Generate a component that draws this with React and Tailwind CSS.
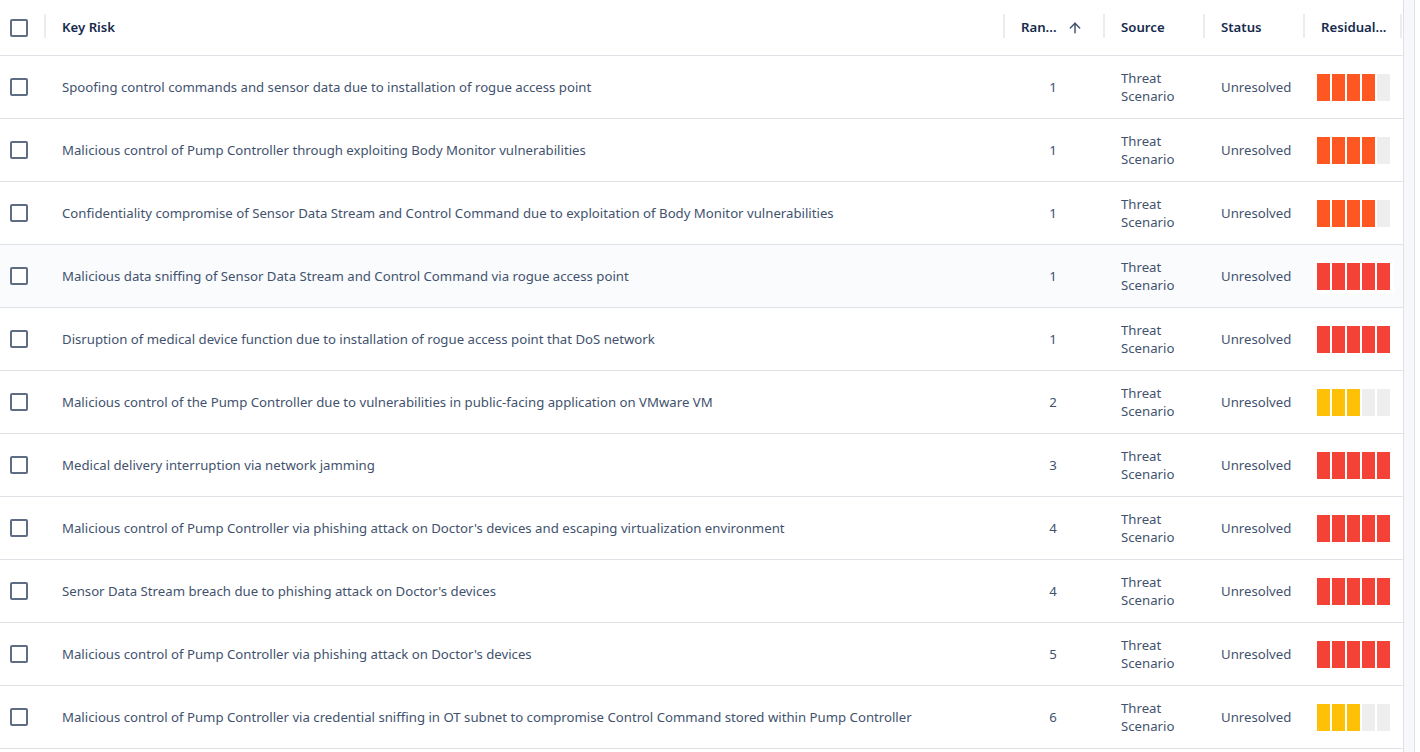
import React from "react"
import { ArrowUp } from "lucide-react"

const COLORS = { orange: "bg-[#ff5722]", red: "bg-[#f44336]", yellow: "bg-[#ffc107]" }

const risks = [
  { title: "Spoofing control commands and sensor data due to installation of rogue access point", rank: 1, level: "orange", filled: 4 },
  { title: "Malicious control of Pump Controller through exploiting Body Monitor vulnerabilities", rank: 1, level: "orange", filled: 4 },
  { title: "Confidentiality compromise of Sensor Data Stream and Control Command due to exploitation of Body Monitor vulnerabilities", rank: 1, level: "orange", filled: 4 },
  { title: "Malicious data sniffing of Sensor Data Stream and Control Command via rogue access point", rank: 1, level: "red", filled: 5, hover: true },
  { title: "Disruption of medical device function due to installation of rogue access point that DoS network", rank: 1, level: "red", filled: 5 },
  { title: "Malicious control of the Pump Controller due to vulnerabilities in public-facing application on VMware VM", rank: 2, level: "yellow", filled: 3 },
  { title: "Medical delivery interruption via network jamming", rank: 3, level: "red", filled: 5 },
  { title: "Malicious control of Pump Controller via phishing attack on Doctor's devices and escaping virtualization environment", rank: 4, level: "red", filled: 5 },
  { title: "Sensor Data Stream breach due to phishing attack on Doctor's devices", rank: 4, level: "red", filled: 5 },
  { title: "Malicious control of Pump Controller via phishing attack on Doctor's devices", rank: 5, level: "red", filled: 5 },
  { title: "Malicious control of Pump Controller via credential sniffing in OT subnet to compromise Control Command stored within Pump Controller", rank: 6, level: "yellow", filled: 3 },
]

const GRID = "grid grid-cols-[44px_959px_100px_100px_100px_100px]"

const Checkbox = () => (
  <div className="w-[18px] h-[18px] rounded-[2px] border-2 border-[#5e6c84] bg-white" />
)

const Sep = () => <div className="absolute left-0 top-[14px] w-[2px] h-[24px] bg-[#ebecf0]" />

const RiskBar = ({ level, filled }) => (
  <div className="flex gap-[2px] bg-white p-1">
    {[0, 1, 2, 3, 4].map((i) => (
      <div key={i} className={`w-[13px] h-[27px] ${i < filled ? COLORS[level] : "bg-[#eeeeee]"}`} />
    ))}
  </div>
)

export default function App() {
  return (
    <div className="flex w-[1420px] h-[752px] bg-white text-[13.2px] text-[#42526e] font-['Noto_Sans',sans-serif] overflow-hidden">
      <div className="w-[1403px]">
        <div className={`${GRID} h-[56px] border-b border-[#dfe1e6] font-semibold text-[#172b4d]`}>
          <div className="flex items-center pl-[10px]">
            <Checkbox />
          </div>
          <div className="relative flex items-center pl-[18px]">
            <Sep />
            Key Risk
          </div>
          <div className="relative flex items-center pl-[18px] pr-[20px]">
            <Sep />
            <span>Ran...</span>
            <ArrowUp size={16} strokeWidth={2.2} className="ml-auto text-[#42526e]" />
          </div>
          <div className="relative flex items-center pl-[18px]">
            <Sep />
            Source
          </div>
          <div className="relative flex items-center pl-[18px]">
            <Sep />
            Status
          </div>
          <div className="relative flex items-center pl-[18px]">
            <Sep />
            <span>Residual...</span>
            <div className="absolute right-[1px] top-[14px] w-[2px] h-[24px] bg-[#ebecf0]" />
          </div>
        </div>
        {risks.map((r, idx) => (
          <div
            key={idx}
            className={`${GRID} h-[63px] border-b border-[#dfe1e6] ${r.hover ? "bg-[#fafbfd]" : "bg-white"}`}
          >
            <div className="flex items-center pl-[10px]">
              <Checkbox />
            </div>
            <div className="flex items-center pl-[18px] pt-[1px]">{r.title}</div>
            <div className="flex items-center justify-center pt-[1px]">{r.rank}</div>
            <div className="flex flex-col justify-center pl-[18px] leading-[18px]">
              <span>Threat</span>
              <span>Scenario</span>
            </div>
            <div className="flex items-center pl-[18px] pt-[1px]">Unresolved</div>
            <div className="flex items-center pl-[10px]">
              <RiskBar level={r.level} filled={r.filled} />
            </div>
          </div>
        ))}
      </div>
      <div className="w-[11px] h-full border-l border-[#dfe1e6] bg-[#f7f8fa]" />
      <div className="w-[1px] h-full bg-[#dde2ea]" />
    </div>
  )
}
